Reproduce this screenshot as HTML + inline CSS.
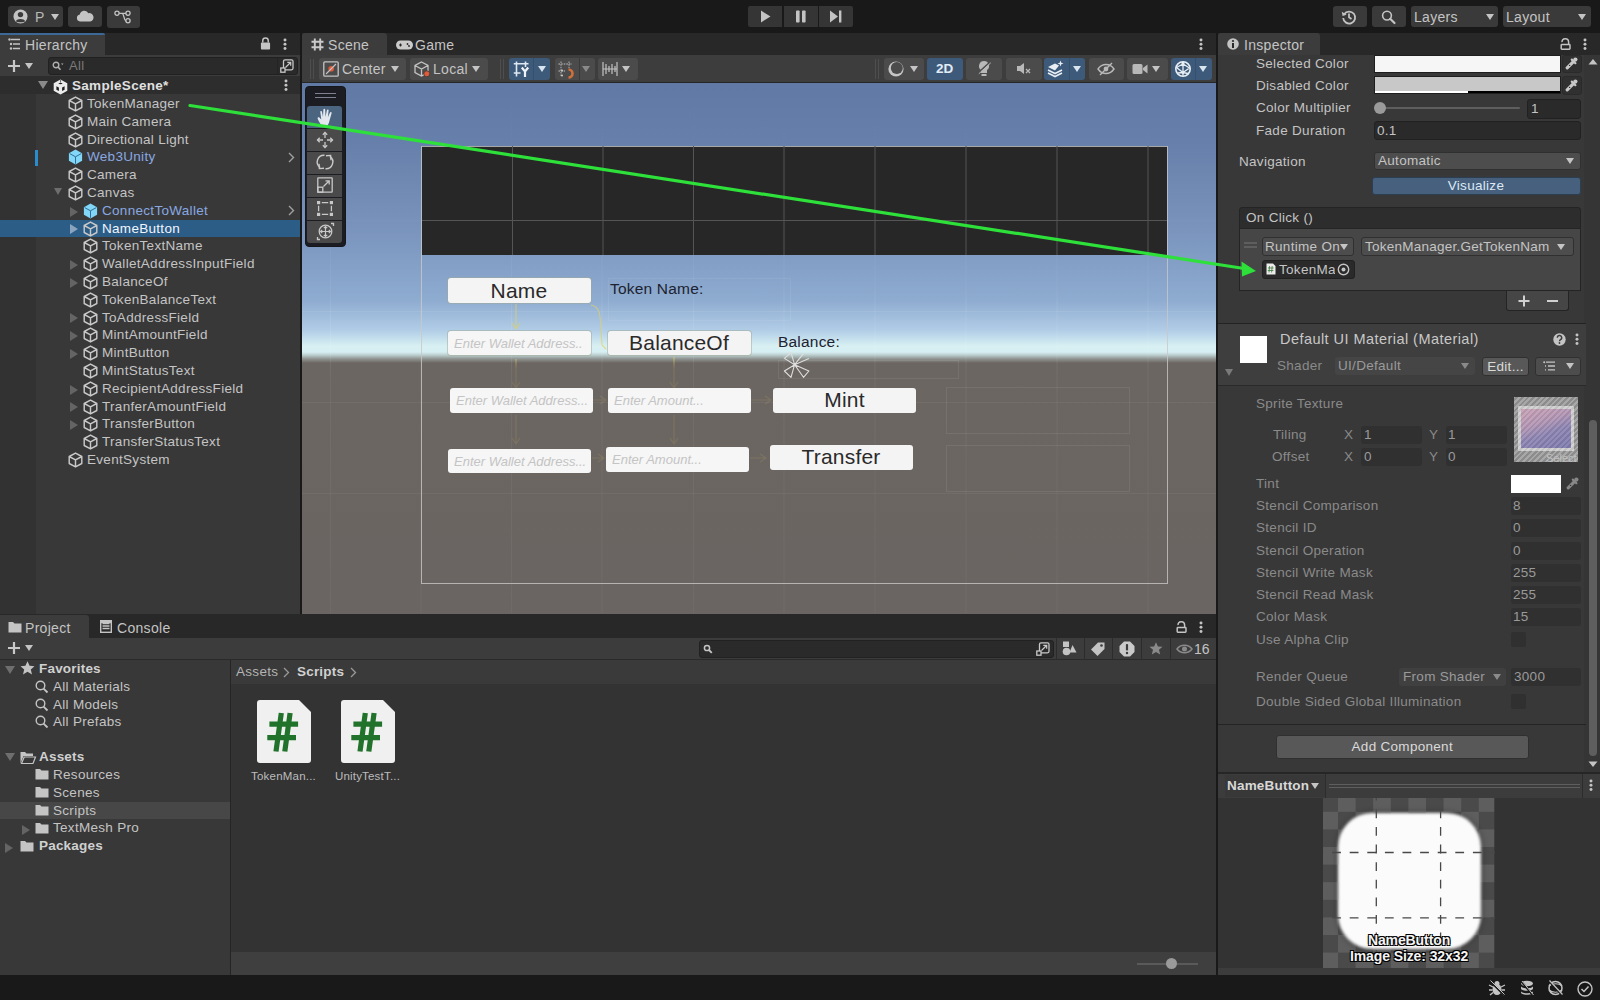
<!DOCTYPE html>
<html><head><meta charset="utf-8">
<style>
*{box-sizing:border-box;margin:0;padding:0}
html,body{width:1600px;height:1000px;overflow:hidden;background:#191919;font-family:"Liberation Sans",sans-serif;color:#c4c4c4;font-size:13.5px;letter-spacing:0.3px;position:relative}
.a{position:absolute}
.t{position:absolute;white-space:nowrap;line-height:16px;height:16px}
svg.i{position:absolute;overflow:visible}
.btn{position:absolute;background:#383838;border-radius:3px}
.dd{position:absolute;width:0;height:0;border-left:4.5px solid transparent;border-right:4.5px solid transparent;border-top:6px solid #c4c4c4}
.row{position:absolute;left:0;width:300px;height:17.8px}
.fold{position:absolute;width:0;height:0;border-top:5px solid transparent;border-bottom:5px solid transparent;border-left:8px solid #646464;margin-top:1px}
.foldd{position:absolute;width:0;height:0;border-left:5px solid transparent;border-right:5px solid transparent;border-top:8px solid #6e6e6e}
</style></head><body>
<svg width="0" height="0" style="position:absolute">
<defs>
<symbol id="cube" viewBox="0 0 14 16"><path d="M7 1.1 L13.3 4.5 L13.3 11.5 L7 14.9 L0.7 11.5 L0.7 4.5 Z M0.7 4.5 L7 7.9 L13.3 4.5 M7 7.9 L7 14.9" fill="none" stroke="#c8c8c8" stroke-width="1.45" stroke-linejoin="round"/></symbol>
<symbol id="cubeb" viewBox="0 0 14 16"><path d="M7 0.6 L13.6 4.2 L13.6 11.8 L7 15.4 L0.4 11.8 L0.4 4.2 Z" fill="#82d6f8"/><path d="M1.2 4.6 L7 7.8 L12.8 4.6 M7 7.8 V14.8" fill="none" stroke="#2f6f96" stroke-width="1"/></symbol>
<symbol id="kebab" viewBox="0 0 4 14"><circle cx="2" cy="2.2" r="1.6" fill="#c4c4c4"/><circle cx="2" cy="6.8" r="1.6" fill="#c4c4c4"/><circle cx="2" cy="11.4" r="1.6" fill="#c4c4c4"/></symbol>
<symbol id="lock" viewBox="0 0 12 14"><path d="M3 6 V4 A3 3 0 0 1 9 4 V6" fill="none" stroke="#c4c4c4" stroke-width="1.6"/><rect x="1" y="6" width="10" height="7.5" rx="1" fill="#c4c4c4"/></symbol>
<symbol id="lockopen" viewBox="0 0 12 14"><path d="M2.2 5.5 A3.6 3.6 0 0 1 9.4 5.2 V7.5" fill="none" stroke="#c4c4c4" stroke-width="1.6"/><rect x="1.3" y="8" width="9.6" height="5.2" rx="0.8" fill="none" stroke="#c4c4c4" stroke-width="1.6"/></symbol>
<symbol id="eyedrop" viewBox="0 0 13 13"><path d="M8.2 4.8 L2.2 10.8" stroke="#c8c8c8" stroke-width="3.2" stroke-linecap="round"/><circle cx="4.6" cy="8.4" r="0.7" fill="#303030"/><path d="M6.8 2.6 L10.4 6.2" stroke="#c8c8c8" stroke-width="2.2" stroke-linecap="round"/><circle cx="10.4" cy="2.6" r="2.1" fill="#c8c8c8"/></symbol>
</defs>
</svg>

<!-- ================= TOP TOOLBAR ================= -->
<div class="a" style="left:0;top:0;width:1600px;height:33px;background:#191919"></div>
<div class="btn" style="left:8px;top:6px;width:55px;height:21px;background:#3a3a3a"></div>
<svg class="i" style="left:13px;top:9px" width="15" height="15" viewBox="0 0 15 15"><circle cx="7.5" cy="7.5" r="7" fill="#c4c4c4"/><circle cx="7.5" cy="5.6" r="2.7" fill="#3a3a3a"/><path d="M2.8 12.2 C4 9.4 11 9.4 12.2 12.2 C10.8 13.6 4.2 13.6 2.8 12.2Z" fill="#3a3a3a"/></svg>
<div class="t" style="left:35px;top:9px;color:#b8b8b8;font-size:14px">P</div>
<div class="dd" style="left:51px;top:14px"></div>
<div class="btn" style="left:68px;top:6px;width:34px;height:21px;background:#3a3a3a"></div>
<svg class="i" style="left:76px;top:10px" width="18" height="12" viewBox="0 0 18 12"><path d="M4 11.5 A3.6 3.6 0 0 1 3.8 4.4 A4.6 4.6 0 0 1 12.4 3.2 A4 4 0 0 1 14.2 11.5 Z" fill="#c4c4c4"/></svg>
<div class="btn" style="left:107px;top:6px;width:33px;height:22px;background:#3a3a3a"></div>
<svg class="i" style="left:114px;top:10px" width="18" height="14" viewBox="0 0 18 14"><circle cx="3" cy="3.3" r="2.1" fill="none" stroke="#c4c4c4" stroke-width="1.3"/><circle cx="14" cy="3.3" r="2.1" fill="none" stroke="#c4c4c4" stroke-width="1.3"/><circle cx="14" cy="10.8" r="2.1" fill="none" stroke="#c4c4c4" stroke-width="1.3"/><path d="M5.1 3.3 H11.9 M8 3.3 C10 3.3 10 10.8 11.9 10.8" fill="none" stroke="#c4c4c4" stroke-width="1.3"/></svg>

<!-- play controls -->
<div class="a" style="left:748px;top:6px;width:34px;height:21px;background:#353535;border-radius:2px 0 0 2px"></div>
<div class="a" style="left:784px;top:6px;width:34px;height:21px;background:#353535"></div>
<div class="a" style="left:819px;top:6px;width:34px;height:21px;background:#353535;border-radius:0 2px 2px 0"></div>
<svg class="i" style="left:760px;top:10px" width="12" height="13" viewBox="0 0 12 13"><path d="M1 0.5 L10.5 6.5 L1 12.5Z" fill="#c4c4c4"/></svg>
<svg class="i" style="left:795px;top:10px" width="12" height="13" viewBox="0 0 12 13"><rect x="1" y="0.5" width="3.6" height="12" rx="0.8" fill="#c4c4c4"/><rect x="7" y="0.5" width="3.6" height="12" rx="0.8" fill="#c4c4c4"/></svg>
<svg class="i" style="left:829px;top:10px" width="14" height="13" viewBox="0 0 14 13"><path d="M1 0.5 L9 6.5 L1 12.5Z" fill="#c4c4c4"/><rect x="10" y="0.5" width="2.4" height="12" fill="#c4c4c4"/></svg>

<!-- right toolbar -->
<div class="btn" style="left:1333px;top:6px;width:34px;height:21px;background:#3a3a3a"></div>
<svg class="i" style="left:1341px;top:9px" width="16" height="16" viewBox="0 0 16 16"><path d="M3.2 5.2 A6 6 0 1 1 2.2 9" fill="none" stroke="#c4c4c4" stroke-width="1.8"/><path d="M0.8 2.8 L1.6 7 L5.6 5.8Z" fill="#c4c4c4"/><path d="M8 4.5 V8.3 L10.5 10" fill="none" stroke="#c4c4c4" stroke-width="1.8"/></svg>
<div class="btn" style="left:1372px;top:6px;width:34px;height:21px;background:#3a3a3a"></div>
<svg class="i" style="left:1381px;top:10px" width="16" height="14" viewBox="0 0 16 14"><circle cx="6" cy="5.6" r="4.4" fill="none" stroke="#c4c4c4" stroke-width="1.6"/><path d="M9.2 8.8 L13.5 13" stroke="#c4c4c4" stroke-width="2.2" stroke-linecap="round"/></svg>
<div class="btn" style="left:1411px;top:6px;width:87px;height:21px;background:#3a3a3a"></div>
<div class="t" style="left:1414px;top:9px;color:#c4c4c4;font-size:14px">Layers</div>
<div class="dd" style="left:1486px;top:14px"></div>
<div class="btn" style="left:1503px;top:6px;width:88px;height:21px;background:#3a3a3a"></div>
<div class="t" style="left:1506px;top:9px;color:#c4c4c4;font-size:14px">Layout</div>
<div class="dd" style="left:1578px;top:14px"></div>

<!-- ================= HIERARCHY ================= -->
<div class="a" style="left:0;top:33px;width:300px;height:22px;background:#282828"></div>
<div class="a" style="left:0;top:33px;width:105px;height:22px;background:#3c3c3c;border-top:2px solid #3b6896;border-radius:0 2px 0 0"></div>
<svg class="i" style="left:8px;top:38px" width="13" height="12" viewBox="0 0 13 12"><circle cx="1.5" cy="1.5" r="1.2" fill="#c4c4c4"/><circle cx="3" cy="6" r="1.2" fill="#c4c4c4"/><circle cx="3" cy="10.5" r="1.2" fill="#c4c4c4"/><path d="M3 1.5 H12 M5 6 H12 M5 10.5 H12" stroke="#c4c4c4" stroke-width="1.4"/></svg>
<div class="t" style="left:25px;top:37px;color:#c4c4c4;font-size:14px">Hierarchy</div>
<svg class="i" style="left:260px;top:37px" width="11" height="13"><use href="#lock"/></svg>
<svg class="i" style="left:283px;top:38px" width="4" height="13"><use href="#kebab"/></svg>
<div class="a" style="left:0;top:55px;width:300px;height:21px;background:#3c3c3c"></div>
<svg class="i" style="left:7px;top:59px" width="14" height="14" viewBox="0 0 14 14"><path d="M7 1 V13 M1 7 H13" stroke="#c8c8c8" stroke-width="2.2"/></svg>
<div class="dd" style="left:25px;top:63px"></div>
<div class="a" style="left:48px;top:57px;width:250px;height:18px;background:#2a2a2a;border-radius:3px;border:1px solid #212121"></div>
<svg class="i" style="left:52px;top:61px" width="12" height="10" viewBox="0 0 12 10"><circle cx="4" cy="4" r="2.8" fill="none" stroke="#b0b0b0" stroke-width="1.4"/><path d="M6 6 L8.5 8.8" stroke="#b0b0b0" stroke-width="1.6"/><path d="M9 2.5 L11.5 2.5 L10.25 4Z" fill="#b0b0b0"/></svg>
<div class="t" style="left:69px;top:58px;color:#7a7a7a;font-size:13px">All</div>
<div class="a" style="left:277px;top:58px;width:1px;height:16px;background:#242424"></div><svg class="i" style="left:280px;top:58.5px" width="14" height="14" viewBox="0 0 14 14"><rect x="3.5" y="0.8" width="9.5" height="10" rx="1.5" fill="none" stroke="#c8c8c8" stroke-width="1.3"/><rect x="0.8" y="9" width="4.2" height="4.2" fill="#2a2a2a" stroke="#c8c8c8" stroke-width="1.3"/><path d="M5.5 8.5 L10.5 3.5 M7.3 3.3 H10.7 V6.7" fill="none" stroke="#c8c8c8" stroke-width="1.2"/></svg>

<!-- hierarchy body -->
<div class="a" style="left:0;top:76px;width:300px;height:538px;background:#383838"></div>
<div class="a" style="left:0;top:94px;width:36px;height:520px;background:#323232"></div>
<div class="a" style="left:0;top:76px;width:300px;height:18px;background:#2d2d2d"></div>
<div class="foldd" style="left:38px;top:81px;border-top-color:#8a8a8a"></div>
<svg class="i" style="left:52.5px;top:78.5px" width="15" height="16" viewBox="0 0 15 16"><path d="M7.5 0.4 L14.3 4.2 L14.3 11.8 L7.5 15.6 L0.7 11.8 L0.7 4.2 Z" fill="#ececec"/><path d="M5.3 4.3 Q7.5 6.3 9.7 4.3 Q7.5 3.1 5.3 4.3Z M3.4 7.2 L5.9 8.5 L5.9 12.1 L3.4 10.8Z M11.6 7.2 L9.1 8.5 L9.1 12.1 L11.6 10.8Z" fill="#202020"/><path d="M7.5 0.8 V3.6" stroke="#777" stroke-width="1.1"/></svg>
<div class="t" style="left:72px;top:78px;color:#e0e0e0;font-weight:bold;font-size:13.5px;letter-spacing:0.3px">SampleScene*</div>
<svg class="i" style="left:284px;top:79px" width="4" height="13"><use href="#kebab"/></svg>

<!-- rows -->
<div class="a" style="left:0;top:219.7px;width:300px;height:17.8px;background:#2c5d87"></div>
<div class="a" style="left:35px;top:150px;width:3px;height:15.5px;background:#2a8ccc"></div>

<svg class="i" style="left:67.7px;top:96px" width="15" height="16"><use href="#cube"/></svg>
<div class="t" style="left:87px;top:96px">TokenManager</div>
<svg class="i" style="left:67.7px;top:113.8px" width="15" height="16"><use href="#cube"/></svg>
<div class="t" style="left:87px;top:113.8px">Main Camera</div>
<svg class="i" style="left:67.7px;top:131.6px" width="15" height="16"><use href="#cube"/></svg>
<div class="t" style="left:87px;top:131.6px">Directional Light</div>
<svg class="i" style="left:67.7px;top:149.4px" width="15" height="16"><use href="#cubeb"/></svg>
<div class="t" style="left:87px;top:149.4px;color:#88a8e2">Web3Unity</div>
<svg class="i" style="left:288px;top:152px" width="7" height="11" viewBox="0 0 7 11"><path d="M1 1 L5.5 5.5 L1 10" fill="none" stroke="#a0a0a0" stroke-width="1.4"/></svg>
<svg class="i" style="left:67.7px;top:167.2px" width="15" height="16"><use href="#cube"/></svg>
<div class="t" style="left:87px;top:167.2px">Camera</div>
<div class="foldd" style="left:54px;top:188px;border-left-width:4.5px;border-right-width:4.5px;border-top-width:7px"></div>
<svg class="i" style="left:67.7px;top:185px" width="15" height="16"><use href="#cube"/></svg>
<div class="t" style="left:87px;top:185px">Canvas</div>

<div class="fold" style="left:70px;top:205.6px"></div>
<svg class="i" style="left:83px;top:202.8px" width="15" height="16"><use href="#cubeb"/></svg>
<div class="t" style="left:102px;top:202.8px;color:#88a8e2">ConnectToWallet</div>
<svg class="i" style="left:288px;top:205px" width="7" height="11" viewBox="0 0 7 11"><path d="M1 1 L5.5 5.5 L1 10" fill="none" stroke="#a0a0a0" stroke-width="1.4"/></svg>
<div class="fold" style="left:70px;top:223.4px;border-left-color:#8aa4c0"></div>
<svg class="i" style="left:83px;top:220.6px" width="15" height="16"><use href="#cube"/></svg>
<div class="t" style="left:102px;top:220.6px;color:#f0f6ff">NameButton</div>
<svg class="i" style="left:83px;top:238.4px" width="15" height="16"><use href="#cube"/></svg>
<div class="t" style="left:102px;top:238.4px">TokenTextName</div>
<div class="fold" style="left:70px;top:259px"></div>
<svg class="i" style="left:83px;top:256.2px" width="15" height="16"><use href="#cube"/></svg>
<div class="t" style="left:102px;top:256.2px">WalletAddressInputField</div>
<div class="fold" style="left:70px;top:276.8px"></div>
<svg class="i" style="left:83px;top:274px" width="15" height="16"><use href="#cube"/></svg>
<div class="t" style="left:102px;top:274px">BalanceOf</div>
<svg class="i" style="left:83px;top:291.8px" width="15" height="16"><use href="#cube"/></svg>
<div class="t" style="left:102px;top:291.8px">TokenBalanceText</div>
<div class="fold" style="left:70px;top:312.4px"></div>
<svg class="i" style="left:83px;top:309.6px" width="15" height="16"><use href="#cube"/></svg>
<div class="t" style="left:102px;top:309.6px">ToAddressField</div>
<div class="fold" style="left:70px;top:330.2px"></div>
<svg class="i" style="left:83px;top:327.4px" width="15" height="16"><use href="#cube"/></svg>
<div class="t" style="left:102px;top:327.4px">MintAmountField</div>
<div class="fold" style="left:70px;top:348px"></div>
<svg class="i" style="left:83px;top:345.2px" width="15" height="16"><use href="#cube"/></svg>
<div class="t" style="left:102px;top:345.2px">MintButton</div>
<svg class="i" style="left:83px;top:363px" width="15" height="16"><use href="#cube"/></svg>
<div class="t" style="left:102px;top:363px">MintStatusText</div>
<div class="fold" style="left:70px;top:383.6px"></div>
<svg class="i" style="left:83px;top:380.8px" width="15" height="16"><use href="#cube"/></svg>
<div class="t" style="left:102px;top:380.8px">RecipientAddressField</div>
<div class="fold" style="left:70px;top:401.4px"></div>
<svg class="i" style="left:83px;top:398.6px" width="15" height="16"><use href="#cube"/></svg>
<div class="t" style="left:102px;top:398.6px">TranferAmountField</div>
<div class="fold" style="left:70px;top:419.2px"></div>
<svg class="i" style="left:83px;top:416.4px" width="15" height="16"><use href="#cube"/></svg>
<div class="t" style="left:102px;top:416.4px">TransferButton</div>
<svg class="i" style="left:83px;top:434.2px" width="15" height="16"><use href="#cube"/></svg>
<div class="t" style="left:102px;top:434.2px">TransferStatusText</div>
<svg class="i" style="left:67.7px;top:452px" width="15" height="16"><use href="#cube"/></svg>
<div class="t" style="left:87px;top:452px">EventSystem</div>

<!-- ================= SCENE ================= -->
<div class="a" style="left:302px;top:33px;width:914px;height:22px;background:#282828"></div>
<div class="a" style="left:302px;top:33px;width:85px;height:22px;background:#3c3c3c;border-radius:3px 3px 0 0"></div>
<svg class="i" style="left:310.5px;top:37.5px" width="13" height="13" viewBox="0 0 13 13"><path d="M3.8 0.5 V12.5 M9.2 0.5 V12.5 M0.5 3.8 H12.5 M0.5 9.2 H12.5" stroke="#cacaca" stroke-width="1.9"/></svg>
<div class="t" style="left:328px;top:37px;font-size:14px">Scene</div>
<svg class="i" style="left:395.5px;top:39.5px" width="17" height="10" viewBox="0 0 17 10"><path d="M4.5 0.5 H12.5 A4.5 4.5 0 0 1 12.5 9.5 H4.5 A4.5 4.5 0 0 1 4.5 0.5Z" fill="#cacaca"/><path d="M3 5 H6 M4.5 3.5 V6.5" stroke="#282828" stroke-width="1.1"/><circle cx="11.5" cy="4" r="0.9" fill="#282828"/><circle cx="13" cy="6" r="0.9" fill="#282828"/></svg>
<div class="t" style="left:415px;top:37px;font-size:14px">Game</div>
<svg class="i" style="left:1199px;top:38px" width="4" height="13"><use href="#kebab"/></svg>

<div class="a" style="left:302px;top:55px;width:914px;height:28px;background:#3d3d3d;border-bottom:1px solid #262626"></div>
<div class="a" style="left:310px;top:59px;width:1px;height:20px;background:#4e4e4e"></div>
<div class="a" style="left:313px;top:59px;width:1px;height:20px;background:#4e4e4e"></div>
<div class="btn" style="left:319px;top:58px;width:87px;height:22px;background:#4b4b4b"></div>
<svg class="i" style="left:323px;top:61px" width="16" height="16" viewBox="0 0 16 16"><rect x="0.8" y="0.8" width="14.4" height="14.4" rx="1" fill="none" stroke="#c4c4c4" stroke-width="1.3"/><circle cx="8.2" cy="7.8" r="2.8" fill="#e05a3a"/><path d="M3 13 L13 3" stroke="#c4c4c4" stroke-width="1.1"/></svg>
<div class="t" style="left:342px;top:61px;font-size:14px">Center</div>
<div class="dd" style="left:391px;top:66px"></div>
<div class="btn" style="left:410px;top:58px;width:78px;height:22px;background:#4b4b4b"></div>
<svg class="i" style="left:414px;top:61px" width="18" height="17" viewBox="0 0 18 17"><path d="M7.5 1 L14 4.5 L14 11.5 L7.5 15 L1 11.5 L1 4.5Z M1 4.5 L7.5 8 L14 4.5 M7.5 8 V15" fill="none" stroke="#c4c4c4" stroke-width="1.3"/><circle cx="12.8" cy="12.8" r="3" fill="#e05a3a" stroke="#3a3a3a" stroke-width="0.8"/></svg>
<div class="t" style="left:433px;top:61px;font-size:14px">Local</div>
<div class="dd" style="left:472px;top:66px"></div>
<div class="a" style="left:500px;top:59px;width:1px;height:20px;background:#4e4e4e"></div>
<div class="a" style="left:503px;top:59px;width:1px;height:20px;background:#4e4e4e"></div>
<div class="a" style="left:509px;top:58px;width:41px;height:22px;background:#3e5a7a;border-radius:3px"></div>
<div class="a" style="left:533px;top:58px;width:1px;height:22px;background:#34506e"></div>
<svg class="i" style="left:512.5px;top:61px" width="18" height="17" viewBox="0 0 18 17"><path d="M3.5 0.5 V15.5 M12.5 0.5 V6 M0.8 2.8 H15.5 M0.8 12 H7.5" stroke="#dfe8f2" stroke-width="1.6"/><path d="M8.8 6.5 L12 10.5 L15.2 6.5 M12 10.5 V16" fill="none" stroke="#eef3f8" stroke-width="2.2"/></svg>
<div class="dd" style="left:538px;top:66px;border-top-color:#d8e4f0"></div>
<div class="btn" style="left:555px;top:58px;width:40px;height:22px;background:#4b4b4b"></div><div class="a" style="left:578.5px;top:58px;width:1px;height:22px;background:#3a3a3a"></div>
<svg class="i" style="left:558px;top:61px" width="18" height="17" viewBox="0 0 18 17"><path d="M3 0.5 V16 M11 0.5 V7 M0.5 3 H14 M0.5 10 H7" stroke="#9a9a9a" stroke-width="1.3" stroke-dasharray="1.6 1"/><circle cx="4" cy="9.5" r="1.1" fill="#c4c4c4"/><circle cx="4" cy="14.5" r="1.1" fill="#c4c4c4"/><path d="M10.5 8.5 A4 4 0 0 1 10.5 16.5" fill="none" stroke="#d0703a" stroke-width="2.6"/></svg>
<div class="dd" style="left:582px;top:66px;border-top-color:#8a8a8a"></div>
<div class="btn" style="left:598px;top:58px;width:40px;height:22px;background:#4b4b4b"></div>
<svg class="i" style="left:602px;top:61px" width="16" height="16" viewBox="0 0 16 16"><path d="M1 1 V15 M15 1 V15 M1 8 H15 M4 3 V13 M7 5 V11 M10 3 V13 M13 5 V11" stroke="#c4c4c4" stroke-width="1.2"/></svg>
<div class="dd" style="left:622px;top:66px"></div>

<div class="a" style="left:875px;top:59px;width:1px;height:20px;background:#4e4e4e"></div>
<div class="a" style="left:878px;top:59px;width:1px;height:20px;background:#4e4e4e"></div>
<div class="btn" style="left:884px;top:58px;width:40px;height:22px;background:#4b4b4b"></div>
<svg class="i" style="left:887px;top:60px" width="18" height="18" viewBox="0 0 18 18"><circle cx="9" cy="9" r="7.6" fill="#c4c4c4"/><circle cx="9.8" cy="8" r="6" fill="#4b4b4b"/></svg>
<div class="dd" style="left:910px;top:66px"></div>
<div class="a" style="left:927px;top:58px;width:36px;height:22px;background:#3e5a7a;border-radius:3px"></div>
<div class="t" style="left:936px;top:61px;font-size:13.5px;font-weight:bold;color:#e2ecf6;letter-spacing:0">2D</div>
<div class="btn" style="left:966px;top:58px;width:36px;height:22px;background:#4b4b4b"></div>
<svg class="i" style="left:976px;top:60px" width="16" height="17" viewBox="0 0 16 17"><path d="M8 1 A5 5 0 0 1 11 10 V13 H5 V10 A5 5 0 0 1 8 1Z" fill="#b8b8b8"/><rect x="5.5" y="14" width="5" height="2" fill="#b8b8b8"/><path d="M2 13 L14 2" stroke="#4b4b4b" stroke-width="1.6"/><path d="M2.8 13.8 L14.8 2.8" stroke="#b8b8b8" stroke-width="1"/></svg>
<div class="btn" style="left:1006px;top:58px;width:36px;height:22px;background:#4b4b4b"></div>
<svg class="i" style="left:1016px;top:62px" width="16" height="14" viewBox="0 0 16 14"><path d="M1 4 H4 L8 1 V12 L4 9 H1Z" fill="#b8b8b8"/><path d="M10 7 L14 11 M14 7 L10 11" stroke="#b8b8b8" stroke-width="1.3"/></svg>
<div class="a" style="left:1044px;top:58px;width:41px;height:22px;background:#3e5a7a;border-radius:3px"></div>
<div class="a" style="left:1069px;top:58px;width:1px;height:22px;background:#34506e"></div>
<svg class="i" style="left:1047px;top:60px" width="18" height="17" viewBox="0 0 18 17"><path d="M1 10 L8 13.5 L15 10 M1 13 L8 16.5 L15 13" fill="none" stroke="#e8eef4" stroke-width="1.6"/><path d="M1 7 L8 3.5 L12 5.5 L8 10.5Z" fill="#e8eef4"/><path d="M13.5 0.5 L14.3 2.7 L16.5 3.5 L14.3 4.3 L13.5 6.5 L12.7 4.3 L10.5 3.5 L12.7 2.7Z" fill="#e8eef4"/></svg>
<div class="dd" style="left:1073px;top:66px;border-top-color:#d8e4f0"></div>
<div class="btn" style="left:1089px;top:58px;width:35px;height:22px;background:#4b4b4b"></div>
<svg class="i" style="left:1097px;top:62px" width="18" height="14" viewBox="0 0 18 14"><path d="M1 7 C5 1 13 1 17 7 C13 13 5 13 1 7Z" fill="none" stroke="#b8b8b8" stroke-width="1.4"/><circle cx="9" cy="7" r="2.4" fill="#b8b8b8"/><path d="M3 13 L15 1" stroke="#b8b8b8" stroke-width="1.4"/></svg>
<div class="btn" style="left:1127px;top:58px;width:41px;height:22px;background:#4b4b4b"></div>
<svg class="i" style="left:1132px;top:63px" width="16" height="12" viewBox="0 0 16 12"><rect x="0.5" y="1" width="10" height="10" rx="1.5" fill="#b8b8b8"/><path d="M11 5 L15.5 1.5 V10.5 L11 7Z" fill="#b8b8b8"/></svg>
<div class="dd" style="left:1152px;top:66px"></div>
<div class="a" style="left:1171px;top:58px;width:41px;height:22px;background:#3e5a7a;border-radius:3px"></div>
<div class="a" style="left:1195px;top:58px;width:1px;height:22px;background:#34506e"></div>
<svg class="i" style="left:1174px;top:60px" width="18" height="18" viewBox="0 0 18 18"><circle cx="9" cy="9" r="7.2" fill="none" stroke="#e8eef4" stroke-width="1.6"/><path d="M2.5 7.5 L9 4 L15.5 8 L9 12.5Z M9 4 V16 M4 13 L9 12.5 L14 13.5" fill="none" stroke="#e8eef4" stroke-width="1.3"/><circle cx="9" cy="3" r="1.6" fill="#e8eef4"/><circle cx="9" cy="12.5" r="1.4" fill="#e8eef4"/></svg>
<div class="dd" style="left:1199px;top:66px;border-top-color:#d8e4f0"></div>

<!-- scene viewport -->
<div class="a" id="vp" style="left:302px;top:83px;width:914px;height:531px;overflow:hidden;background:linear-gradient(to bottom,#6079a5 0px,#6680ab 60px,#7892bb 140px,#8eabd0 217px,#b0cce6 247px,#c8e2ee 257px,#d8f0f2 263px,#d6eff3 269px,#bccfcf 272px,#8e9290 276px,#6c6662 280px,#6a6562 530px)">
 <!-- grid -->
 <svg width="914" height="530" style="position:absolute;left:0;top:0">
  <defs><linearGradient id="gridg" gradientUnits="userSpaceOnUse" x1="0" y1="0" x2="0" y2="530"><stop offset="0" stop-color="#fff" stop-opacity="0"/><stop offset="0.3" stop-color="#fff" stop-opacity="0.03"/><stop offset="0.48" stop-color="#fff" stop-opacity="0.09"/><stop offset="0.56" stop-color="#fff" stop-opacity="0.05"/><stop offset="1" stop-color="#fff" stop-opacity="0.035"/></linearGradient></defs><g stroke="url(#gridg)" stroke-width="1">
   <path d="M28.5 0V530 M119 0V530 M209.5 0V530 M300 0V530 M391.5 0V530 M482 0V530 M573 0V530 M664 0V530 M755 0V530 M846 0V530"/>
   <path d="M0 46.5H914 M0 137.5H914 M0 228.5H914 M0 319.5H914 M0 410.5H914"/>
  </g>
 </svg>
 <!-- canvas border -->
 
 <!-- dark rect -->
 <div class="a" style="left:120px;top:63px;width:745px;height:109px;background:#272727"></div>
 <div class="a" style="left:119px;top:63px;width:747px;height:438px;border:1px solid #c8c8c8;opacity:0.8"></div>
 <svg width="914" height="530" style="position:absolute;left:0;top:0">
  <g stroke="#555555" stroke-width="1">
   <path d="M210.5 63V172 M301 63V172 M391.5 63V172 M482 63V172 M573 63V172 M664 63V172 M755 63V172 M846 63V172 M120 137.5H865"/>
  </g>
  <!-- faint rects -->
  <g fill="none" stroke="rgba(255,255,255,0.075)" stroke-width="1">
   <rect x="306.5" y="195.5" width="182" height="42"/>
   <rect x="476.5" y="277.5" width="180" height="18"/>
   <rect x="644.5" y="304.5" width="183" height="46"/>
   <rect x="644.5" y="362.5" width="183" height="46"/>
  </g>
  <!-- nav lines (yellow) -->
  <defs><linearGradient id="navg" gradientUnits="userSpaceOnUse" x1="0" y1="0" x2="0" y2="530"><stop offset="0" stop-color="#e0d060" stop-opacity="0.75"/><stop offset="0.52" stop-color="#e0d060" stop-opacity="0.7"/><stop offset="0.54" stop-color="#c8b050" stop-opacity="0.17"/><stop offset="1" stop-color="#c8b050" stop-opacity="0.17"/></linearGradient></defs><g fill="none" stroke="url(#navg)" stroke-width="1.1">
   <path d="M214 221 V245 M210 240 L214 246 L218 240"/>
   <path d="M289 222 C300 224 298 235 300 262 L304 266"/>
   <path d="M372 274 V304 M368 299 L372 305 L376 299"/>
   <path d="M214 276 V304 M210 299 L214 305 L218 299"/>
   <path d="M290 317 L303 317 M298 313 L304 317 L298 321"/>
   <path d="M448 317 L468 317 M463 313 L469 317 L463 321"/>
   <path d="M214 332 V360 M210 355 L214 361 L218 355"/>
   <path d="M372 332 V360 M368 355 L372 361 L376 355"/>
   <path d="M290 375 L302 375 M296 371 L302 375 L296 379"/>
   <path d="M448 375 L464 375 M458 371 L464 375 L458 379"/>
  </g>
 </svg>
 <!-- UI elements -->
 <div class="a" style="left:145.5px;top:195px;width:143px;height:25px;background:#f4f4f4;border-radius:3px;box-shadow:0 0 0 1px rgba(160,170,150,0.5)"></div>
 <div class="t" style="left:145.5px;top:198px;width:143px;text-align:center;color:#2a2a2a;font-size:21px;line-height:20px;height:20px;letter-spacing:0.2px">Name</div>
 <div class="t" style="left:308px;top:198px;color:#1c2230;font-size:15.5px;line-height:16px;letter-spacing:0.2px">Token Name:</div>

 <div class="a" style="left:145.5px;top:248px;width:143px;height:24px;background:#f6f6f6;border-radius:3px;box-shadow:0 0 0 1px rgba(160,170,150,0.5)"></div>
 <div class="t" style="left:152px;top:253px;color:#c4c4c4;font-size:13px;font-style:italic;letter-spacing:0">Enter Wallet Address..</div>
 <div class="a" style="left:305.5px;top:248px;width:143px;height:24px;background:#f4f4f4;border-radius:3px;box-shadow:0 0 0 1px rgba(160,170,150,0.5)"></div>
 <div class="t" style="left:305.5px;top:250px;width:143px;text-align:center;color:#2a2a2a;font-size:21px;line-height:20px;height:20px;letter-spacing:0.2px">BalanceOf</div>
 <div class="t" style="left:476px;top:251px;color:#1c2230;font-size:15.5px;letter-spacing:0.2px">Balance:</div>
 <svg class="i" style="left:478px;top:267px" width="30" height="30" viewBox="0 0 30 30"><path d="M14.6 14.7 L4.4 8.4 L11 2.5 Z M14.6 14.7 L23.6 3.3 M14.6 14.7 L28.9 8.4 M14.6 14.7 L4.4 21 L11 27.3 Z M14.6 14.7 L28.9 21 L23.5 27.3 Z" fill="none" stroke="#dedede" stroke-width="1.1" stroke-linejoin="round"/></svg>

 <div class="a" style="left:147.5px;top:305px;width:143px;height:24.5px;background:#f6f6f6;border-radius:3px"></div>
 <div class="t" style="left:154px;top:310px;color:#c4c4c4;font-size:13px;font-style:italic;letter-spacing:0">Enter Wallet Address...</div>
 <div class="a" style="left:305.5px;top:305px;width:143px;height:24.5px;background:#f6f6f6;border-radius:3px"></div>
 <div class="t" style="left:312px;top:310px;color:#c4c4c4;font-size:13px;font-style:italic;letter-spacing:0">Enter Amount...</div>
 <div class="a" style="left:471px;top:305px;width:143px;height:24.5px;background:#f4f4f4;border-radius:3px"></div>
 <div class="t" style="left:471px;top:307px;width:143px;text-align:center;color:#2a2a2a;font-size:21px;line-height:20px;height:20px;letter-spacing:0.2px">Mint</div>

 <div class="a" style="left:145.5px;top:366px;width:143px;height:24px;background:#f6f6f6;border-radius:3px"></div>
 <div class="t" style="left:152px;top:371px;color:#c4c4c4;font-size:13px;font-style:italic;letter-spacing:0">Enter Wallet Address...</div>
 <div class="a" style="left:303.5px;top:364px;width:143px;height:24.5px;background:#f6f6f6;border-radius:3px"></div>
 <div class="t" style="left:310px;top:369px;color:#c4c4c4;font-size:13px;font-style:italic;letter-spacing:0">Enter Amount...</div>
 <div class="a" style="left:467.5px;top:362px;width:143px;height:24.5px;background:#f4f4f4;border-radius:3px"></div>
 <div class="t" style="left:467.5px;top:364px;width:143px;text-align:center;color:#2a2a2a;font-size:21px;line-height:20px;height:20px;letter-spacing:0.2px">Transfer</div>

 <!-- tools overlay -->
 <div class="a" style="left:2.5px;top:3px;width:41px;height:161px;background:#1b1d22;border-radius:4px;border:1px solid #15171b"></div>
 <div class="a" style="left:13px;top:10px;width:21px;height:1.3px;background:#7d8190"></div>
 <div class="a" style="left:13px;top:14px;width:21px;height:1.3px;background:#7d8190"></div>
 <div class="a" style="left:4.8px;top:22.5px;width:35.6px;height:22.5px;background:#4b6480;border-radius:3px 3px 0 0"></div>
 <div class="a" style="left:4.8px;top:45.5px;width:35.6px;height:22.5px;background:#4a4a4a"></div>
 <div class="a" style="left:4.8px;top:68.5px;width:35.6px;height:22.5px;background:#4a4a4a"></div>
 <div class="a" style="left:4.8px;top:91.5px;width:35.6px;height:22.5px;background:#4a4a4a"></div>
 <div class="a" style="left:4.8px;top:114.5px;width:35.6px;height:22.5px;background:#4a4a4a"></div>
 <div class="a" style="left:4.8px;top:137.5px;width:35.6px;height:22.5px;background:#4a4a4a;border-radius:0 0 3px 3px"></div>
 <svg class="i" style="left:13.8px;top:24.5px" width="18" height="18" viewBox="0 0 18 18"><path d="M5.5 17.5 C3.8 15 1.8 11.8 1.6 10.2 C1.5 9.2 2.8 8.8 3.6 9.7 L5.3 11.6 L4.3 4 C4.2 2.9 5.8 2.7 6 3.8 L7 9 L7.4 1.5 C7.5 0.4 9.1 0.4 9.2 1.5 L9.5 9 L10.9 2.3 C11.1 1.2 12.7 1.4 12.6 2.5 L11.9 9.3 L14 4.6 C14.4 3.6 15.9 4.1 15.6 5.2 L13.6 12.3 C13 15.2 12 17.5 11 17.5 Z" fill="#e2e8ee"/></svg>
 <svg class="i" style="left:13.5px;top:47.5px" width="18" height="18" viewBox="0 0 18 18"><path d="M9 1.5 V7 M9 11 V16.5 M1.5 9 H7 M11 9 H16.5" stroke="#c8c8c8" stroke-width="1.3"/><path d="M6.8 3.7 L9 1.5 L11.2 3.7 M6.8 14.3 L9 16.5 L11.2 14.3 M3.7 6.8 L1.5 9 L3.7 11.2 M14.3 6.8 L16.5 9 L14.3 11.2" fill="none" stroke="#c8c8c8" stroke-width="1.3"/></svg>
 <svg class="i" style="left:13.5px;top:70px" width="18" height="18" viewBox="0 0 18 18"><path d="M8.5 2.2 A6.8 6.8 0 0 0 4.2 14.6" fill="none" stroke="#c8c8c8" stroke-width="1.4"/><path d="M3 10.8 L3.4 15.6 L8 15.2" fill="none" stroke="#c8c8c8" stroke-width="1.4"/><path d="M9.5 15.8 A6.8 6.8 0 0 0 13.8 3.4" fill="none" stroke="#c8c8c8" stroke-width="1.4"/><path d="M10 2.8 L14.6 2.4 L15 7.2" fill="none" stroke="#c8c8c8" stroke-width="1.4"/></svg>
 <svg class="i" style="left:14.5px;top:94px" width="16" height="16" viewBox="0 0 16 16"><rect x="0.8" y="0.8" width="14.4" height="14.4" rx="0.5" fill="none" stroke="#c8c8c8" stroke-width="1.3"/><rect x="0.8" y="10.2" width="5" height="5" fill="none" stroke="#c8c8c8" stroke-width="1.3"/><path d="M6.5 9.5 L12 4 M8.5 3.8 H12.2 V7.5" fill="none" stroke="#c8c8c8" stroke-width="1.3"/></svg>
 <svg class="i" style="left:14px;top:117px" width="18" height="17" viewBox="0 0 18 17"><rect x="1" y="1" width="3.2" height="3.2" fill="#c8c8c8"/><rect x="13.8" y="1" width="3.2" height="3.2" fill="#c8c8c8"/><rect x="1" y="12.8" width="3.2" height="3.2" fill="#c8c8c8"/><rect x="13.8" y="12.8" width="3.2" height="3.2" fill="#c8c8c8"/><path d="M5.8 2.6 H12.2 M5.8 14.4 H12.2 M2.6 5.8 V11.2 M15.4 5.8 V11.2" stroke="#c8c8c8" stroke-width="1.3"/></svg>
 <svg class="i" style="left:13.5px;top:139px" width="19" height="19" viewBox="0 0 19 19"><circle cx="9.5" cy="9.5" r="6.3" fill="none" stroke="#c8c8c8" stroke-width="1.3"/><path d="M9.5 4.5 V14.5 M4.5 9.5 H14.5" stroke="#c8c8c8" stroke-width="1.2"/><path d="M7.8 6.2 L9.5 4.5 L11.2 6.2 M7.8 12.8 L9.5 14.5 L11.2 12.8 M6.2 7.8 L4.5 9.5 L6.2 11.2 M12.8 7.8 L14.5 9.5 L12.8 11.2" fill="none" stroke="#c8c8c8" stroke-width="1.2"/><path d="M15 1.5 H17.5 V4 M4 17.5 H1.5 V15" fill="none" stroke="#c8c8c8" stroke-width="1.3"/></svg>
</div>

<!-- ================= PROJECT ================= -->
<div class="a" style="left:0;top:614px;width:1216px;height:24px;background:#282828"></div>
<div class="a" style="left:0;top:615px;width:89px;height:23px;background:#3c3c3c;border-radius:0 3px 0 0"></div>
<svg class="i" style="left:8px;top:621px" width="14" height="12" viewBox="0 0 14 12"><path d="M0.5 1 H5 L6.5 2.5 H13.5 V11.5 H0.5Z" fill="#c4c4c4"/></svg>
<div class="t" style="left:25px;top:620px;font-size:14px">Project</div>
<svg class="i" style="left:100px;top:620px" width="12" height="13" viewBox="0 0 12 13"><rect x="0.7" y="0.7" width="10.6" height="11.6" fill="none" stroke="#c4c4c4" stroke-width="1.4"/><path d="M2.5 3.5 H9.5 M2.5 6 H9.5 M2.5 8.5 H9.5" stroke="#c4c4c4" stroke-width="1.3"/><rect x="0.7" y="0.7" width="10.6" height="2.5" fill="#c4c4c4"/></svg>
<div class="t" style="left:117px;top:620px;font-size:14px">Console</div>
<svg class="i" style="left:1176px;top:620px" width="11" height="13"><use href="#lockopen"/></svg>
<svg class="i" style="left:1199px;top:621px" width="4" height="13"><use href="#kebab"/></svg>

<div class="a" style="left:0;top:638px;width:1216px;height:22px;background:#3c3c3c;border-bottom:1px solid #2a2a2a"></div>
<svg class="i" style="left:7px;top:641px" width="14" height="14" viewBox="0 0 14 14"><path d="M7 1 V13 M1 7 H13" stroke="#c8c8c8" stroke-width="2.2"/></svg>
<div class="dd" style="left:25px;top:645px"></div>
<div class="a" style="left:699px;top:640px;width:355px;height:18px;background:#2a2a2a;border-radius:3px;border:1px solid #212121"></div>
<svg class="i" style="left:703px;top:644px" width="10" height="10" viewBox="0 0 10 10"><circle cx="4" cy="4" r="2.6" fill="none" stroke="#c4c4c4" stroke-width="1.5"/><path d="M6 6 L8.8 8.8" stroke="#c4c4c4" stroke-width="1.8"/></svg>
<svg class="i" style="left:1036px;top:641.5px" width="14" height="14" viewBox="0 0 14 14"><rect x="3.5" y="0.8" width="9.5" height="10" rx="1.5" fill="none" stroke="#c8c8c8" stroke-width="1.3"/><rect x="0.8" y="9" width="4.2" height="4.2" fill="#2a2a2a" stroke="#c8c8c8" stroke-width="1.3"/><path d="M5.5 8.5 L10.5 3.5 M7.3 3.3 H10.7 V6.7" fill="none" stroke="#c8c8c8" stroke-width="1.2"/></svg>
<div class="a" style="left:1056px;top:638px;width:1px;height:22px;background:#2c2c2c"></div>
<svg class="i" style="left:1062px;top:641px" width="15" height="15" viewBox="0 0 15 15"><rect x="1" y="0.5" width="6" height="5.5" fill="#c4c4c4"/><circle cx="4.5" cy="10.5" r="3.8" fill="#c4c4c4"/><path d="M10.5 4 L14.5 11.5 H7.5Z" fill="#c4c4c4"/></svg>
<div class="a" style="left:1084px;top:638px;width:1px;height:22px;background:#2c2c2c"></div>
<svg class="i" style="left:1091px;top:642px" width="14" height="14" viewBox="0 0 14 14"><path d="M7 0.5 H13.5 V7 L6.5 14 L0 7.5Z" fill="#c4c4c4"/><circle cx="10.5" cy="3.5" r="1.3" fill="#3c3c3c"/></svg>
<div class="a" style="left:1112px;top:638px;width:1px;height:22px;background:#2c2c2c"></div>
<svg class="i" style="left:1119px;top:641px" width="16" height="16" viewBox="0 0 16 16"><path d="M5 0.5 H11 L15.5 5 V11 L11 15.5 H5 L0.5 11 V5Z" fill="#cacaca"/><rect x="6.9" y="3" width="2.2" height="6.5" rx="0.8" fill="#3c3c3c"/><circle cx="8" cy="12" r="1.2" fill="#3c3c3c"/></svg>
<div class="a" style="left:1141px;top:638px;width:1px;height:22px;background:#2c2c2c"></div>
<svg class="i" style="left:1149px;top:642px" width="14" height="13" viewBox="0 0 14 13"><path d="M7 0.3 L8.9 4.5 L13.5 4.8 L10 7.8 L11.2 12.5 L7 10 L2.8 12.5 L4 7.8 L0.5 4.8 L5.1 4.5Z" fill="#8a8a8a"/></svg>
<div class="a" style="left:1170px;top:638px;width:1px;height:22px;background:#2c2c2c"></div>
<svg class="i" style="left:1176px;top:644px" width="17" height="10" viewBox="0 0 17 10"><path d="M1 5 C4.5 0 12.5 0 16 5 C12.5 10 4.5 10 1 5Z" fill="none" stroke="#8a8a8a" stroke-width="1.5"/><circle cx="8.5" cy="5" r="2.5" fill="#8a8a8a"/></svg>
<div class="t" style="left:1194px;top:641px;font-size:14px;color:#c4c4c4;letter-spacing:0">16</div>

<!-- left tree -->
<div class="a" style="left:0;top:660px;width:230px;height:315px;background:#383838"></div>
<div class="a" style="left:230px;top:660px;width:1px;height:315px;background:#252525"></div>
<div class="foldd" style="left:5px;top:666px"></div>
<svg class="i" style="left:20px;top:661px" width="15" height="14" viewBox="0 0 15 14"><path d="M7.5 0.3 L9.6 4.8 L14.5 5.2 L10.8 8.4 L12 13.5 L7.5 10.8 L3 13.5 L4.2 8.4 L0.5 5.2 L5.4 4.8Z" fill="#c4c4c4"/></svg>
<div class="t" style="left:39px;top:661px;font-weight:bold;color:#d0d0d0;letter-spacing:0.2px">Favorites</div>
<svg class="i" style="left:35px;top:680px" width="14" height="14" viewBox="0 0 14 14"><circle cx="5.5" cy="5.5" r="4.3" fill="none" stroke="#c4c4c4" stroke-width="1.4"/><path d="M8.6 8.6 L12.5 12.5" stroke="#c4c4c4" stroke-width="1.8"/></svg>
<div class="t" style="left:53px;top:679px">All Materials</div>
<svg class="i" style="left:35px;top:698px" width="14" height="14" viewBox="0 0 14 14"><circle cx="5.5" cy="5.5" r="4.3" fill="none" stroke="#c4c4c4" stroke-width="1.4"/><path d="M8.6 8.6 L12.5 12.5" stroke="#c4c4c4" stroke-width="1.8"/></svg>
<div class="t" style="left:53px;top:697px">All Models</div>
<svg class="i" style="left:35px;top:715px" width="14" height="14" viewBox="0 0 14 14"><circle cx="5.5" cy="5.5" r="4.3" fill="none" stroke="#c4c4c4" stroke-width="1.4"/><path d="M8.6 8.6 L12.5 12.5" stroke="#c4c4c4" stroke-width="1.8"/></svg>
<div class="t" style="left:53px;top:714px">All Prefabs</div>

<div class="foldd" style="left:5px;top:753px"></div>
<svg class="i" style="left:20px;top:751px" width="16" height="13" viewBox="0 0 16 13"><path d="M0.5 12.5 V1 H5 L6.5 2.5 H13 V5 H3.5 L0.5 12.5Z" fill="#c4c4c4"/><path d="M1.5 12.5 L4.2 6 H15.5 L13 12.5Z" fill="none" stroke="#c4c4c4" stroke-width="1.2"/></svg>
<div class="t" style="left:39px;top:749px;font-weight:bold;color:#d0d0d0;letter-spacing:0.2px">Assets</div>
<svg class="i" style="left:35px;top:768px" width="14" height="12" viewBox="0 0 14 12"><path d="M0.5 1 H5 L6.5 2.5 H13.5 V11.5 H0.5Z" fill="#c4c4c4"/></svg>
<div class="t" style="left:53px;top:767px">Resources</div>
<svg class="i" style="left:35px;top:786px" width="14" height="12" viewBox="0 0 14 12"><path d="M0.5 1 H5 L6.5 2.5 H13.5 V11.5 H0.5Z" fill="#c4c4c4"/></svg>
<div class="t" style="left:53px;top:785px">Scenes</div>
<div class="a" style="left:0;top:801.5px;width:230px;height:17.8px;background:#474747"></div>
<svg class="i" style="left:35px;top:804px" width="14" height="12" viewBox="0 0 14 12"><path d="M0.5 1 H5 L6.5 2.5 H13.5 V11.5 H0.5Z" fill="#c4c4c4"/></svg>
<div class="t" style="left:53px;top:803px">Scripts</div>
<div class="fold" style="left:22px;top:824px"></div>
<svg class="i" style="left:35px;top:822px" width="14" height="12" viewBox="0 0 14 12"><path d="M0.5 1 H5 L6.5 2.5 H13.5 V11.5 H0.5Z" fill="#c4c4c4"/></svg>
<div class="t" style="left:53px;top:820px">TextMesh Pro</div>
<div class="fold" style="left:5px;top:842px"></div>
<svg class="i" style="left:20px;top:840px" width="14" height="12" viewBox="0 0 14 12"><path d="M0.5 1 H5 L6.5 2.5 H13.5 V11.5 H0.5Z" fill="#c4c4c4"/></svg>
<div class="t" style="left:39px;top:838px;font-weight:bold;color:#d0d0d0;letter-spacing:0.2px">Packages</div>

<!-- right grid -->
<div class="a" style="left:231px;top:660px;width:985px;height:315px;background:#333333"></div>
<div class="a" style="left:231px;top:660px;width:985px;height:24px;background:#3a3a3a"></div>
<div class="t" style="left:236px;top:664px;color:#b4b4b4">Assets</div>
<svg class="i" style="left:283px;top:667px" width="7" height="11" viewBox="0 0 7 11"><path d="M1 1 L5.5 5.5 L1 10" fill="none" stroke="#9a9a9a" stroke-width="1.3"/></svg>
<div class="t" style="left:297px;top:664px;font-weight:bold;color:#d0d0d0;letter-spacing:0.2px">Scripts</div>
<svg class="i" style="left:350px;top:667px" width="7" height="11" viewBox="0 0 7 11"><path d="M1 1 L5.5 5.5 L1 10" fill="none" stroke="#9a9a9a" stroke-width="1.3"/></svg>

<svg class="i" style="left:257px;top:699.5px" width="54" height="63" viewBox="0 0 54 63"><path d="M3 0 H42 L54 12 V60 A3 3 0 0 1 51 63 H3 A3 3 0 0 1 0 60 V3 A3 3 0 0 1 3 0Z" fill="#f0f0f0"/><path d="M24.3 13 L19 51.5 M33.1 13 L27.8 51.5 M12.4 24.2 H41.1 M10.3 37.7 H39" stroke="#21722a" stroke-width="5.2"/></svg>
<div class="t" style="left:246px;top:768px;width:75px;text-align:center;font-size:11.5px;letter-spacing:0.2px;color:#bcbcbc">TokenMan...</div>
<svg class="i" style="left:341px;top:699.5px" width="54" height="63" viewBox="0 0 54 63"><path d="M3 0 H42 L54 12 V60 A3 3 0 0 1 51 63 H3 A3 3 0 0 1 0 60 V3 A3 3 0 0 1 3 0Z" fill="#f0f0f0"/><path d="M24.3 13 L19 51.5 M33.1 13 L27.8 51.5 M12.4 24.2 H41.1 M10.3 37.7 H39" stroke="#21722a" stroke-width="5.2"/></svg>
<div class="t" style="left:330px;top:768px;width:75px;text-align:center;font-size:11.5px;letter-spacing:0.2px;color:#bcbcbc">UnityTestT...</div>

<div class="a" style="left:231px;top:952px;width:985px;height:23px;background:#3f3f3f"></div>
<div class="a" style="left:1137px;top:963px;width:61px;height:1.5px;background:#5a5a5a"></div>
<div class="a" style="left:1166px;top:958px;width:11px;height:11px;border-radius:50%;background:#9a9a9a"></div>

<!-- bottom status bar -->
<div class="a" style="left:0;top:975.5px;width:1600px;height:24.5px;background:#191919"></div>
<svg class="i" style="left:1488px;top:980px" width="18" height="16" viewBox="0 0 18 16"><ellipse cx="9" cy="9.5" rx="4.5" ry="5.5" fill="#c4c4c4"/><circle cx="9" cy="3.5" r="2.5" fill="#c4c4c4"/><path d="M1 5 L5 7 M17 5 L13 7 M1 10 H4.5 M17 10 H13.5 M2 15 L5 12.5 M16 15 L13 12.5" stroke="#c4c4c4" stroke-width="1.3"/><path d="M2 1 L16 15" stroke="#191919" stroke-width="2"/><path d="M2.5 0.5 L16.5 14.5" stroke="#c4c4c4" stroke-width="1"/></svg>
<svg class="i" style="left:1519px;top:980px" width="16" height="16" viewBox="0 0 16 16"><ellipse cx="8" cy="3.5" rx="6" ry="2.8" fill="#c4c4c4"/><path d="M2 6 C2 9 14 9 14 6 V8.5 C14 11.5 2 11.5 2 8.5Z M2 11 C2 14 14 14 14 11 V12.5 C14 15.5 2 15.5 2 12.5Z" fill="#c4c4c4"/><path d="M2.5 1.5 L14 15.5" stroke="#191919" stroke-width="2"/><path d="M3 1 L14.5 15" stroke="#c4c4c4" stroke-width="1"/></svg>
<svg class="i" style="left:1547px;top:980px" width="17" height="16" viewBox="0 0 17 16"><circle cx="8.5" cy="8" r="6.5" fill="none" stroke="#c4c4c4" stroke-width="1.5"/><path d="M2 6 C5 3 12 3 15 6 M2 10 C5 13 12 13 15 10" fill="none" stroke="#c4c4c4" stroke-width="1.2"/><path d="M2 1 L15 15" stroke="#191919" stroke-width="2"/><path d="M2.5 0.5 L15.5 14.5" stroke="#c4c4c4" stroke-width="1.2"/></svg>
<svg class="i" style="left:1577px;top:981px" width="16" height="16" viewBox="0 0 16 16"><circle cx="8" cy="8" r="7" fill="none" stroke="#c4c4c4" stroke-width="1.4"/><path d="M4.5 8 L7 10.5 L11.5 5.5" fill="none" stroke="#c4c4c4" stroke-width="1.5"/></svg>

<!-- ================= INSPECTOR ================= -->
<div class="a" style="left:1218px;top:33px;width:382px;height:22px;background:#282828"></div>
<div class="a" style="left:1218px;top:33px;width:102px;height:22px;background:#3c3c3c;border-radius:3px 3px 0 0"></div>
<svg class="i" style="left:1227px;top:38px" width="12" height="12" viewBox="0 0 12 12"><circle cx="6" cy="6" r="5.8" fill="#c4c4c4"/><rect x="5" y="5" width="2" height="5" fill="#282828"/><circle cx="6" cy="3" r="1.1" fill="#282828"/></svg>
<div class="t" style="left:1244px;top:37px;font-size:14px">Inspector</div>
<svg class="i" style="left:1560px;top:37px" width="11" height="13"><use href="#lockopen"/></svg>
<svg class="i" style="left:1583px;top:38px" width="4" height="13"><use href="#kebab"/></svg>

<div class="a" style="left:1218px;top:55px;width:382px;height:920px;background:#383838"></div>
<!-- scrollbar -->
<div class="a" style="left:1584px;top:55px;width:16px;height:717px;background:#353535"></div>
<div class="a" style="left:1589px;top:420px;width:8px;height:336px;background:#5e5e5e;border-radius:4px"></div>
<svg class="i" style="left:1588px;top:58px" width="10" height="7" viewBox="0 0 10 7"><path d="M0.5 6.5 L5 1 L9.5 6.5Z" fill="#c4c4c4"/></svg>
<svg class="i" style="left:1588px;top:761px" width="10" height="7" viewBox="0 0 10 7"><path d="M0.5 0.5 L5 6 L9.5 0.5Z" fill="#c4c4c4"/></svg>

<div class="t" style="left:1256px;top:56px">Selected Color</div>
<div class="a" style="left:1373.5px;top:54.5px;width:187px;height:18px;background:#f6f6f6;border:1px solid #1e1e1e"></div>
<div class="a" style="left:1561.5px;top:54.5px;width:20px;height:18.5px;background:#303030;border-radius:3px;border:1px solid #2a2a2a"></div>
<svg class="i" style="left:1565px;top:57px" width="13" height="13"><use href="#eyedrop"/></svg>
<div class="t" style="left:1256px;top:78px">Disabled Color</div>
<div class="a" style="left:1373.5px;top:76px;width:187px;height:18px;background:#000;border:1px solid #1e1e1e"></div>
<div class="a" style="left:1374.5px;top:77px;width:185px;height:13.5px;background:#c8c8c8"></div>
<div class="a" style="left:1374.5px;top:90.5px;width:93px;height:2.5px;background:#ffffff"></div>
<div class="a" style="left:1561.5px;top:76px;width:20px;height:18.5px;background:#303030;border-radius:3px;border:1px solid #2a2a2a"></div>
<svg class="i" style="left:1565px;top:79px" width="13" height="13"><use href="#eyedrop"/></svg>
<div class="t" style="left:1256px;top:100px">Color Multiplier</div>
<div class="a" style="left:1378px;top:107px;width:142px;height:2px;background:#5e5e5e;border-radius:1px"></div>
<div class="a" style="left:1373.5px;top:102px;width:12px;height:12px;border-radius:50%;background:#9a9a9a"></div>
<div class="a" style="left:1526.5px;top:98.5px;width:54px;height:20px;background:#2a2a2a;border-radius:3px;border:1px solid #212121"></div>
<div class="t" style="left:1531px;top:101px">1</div>
<div class="t" style="left:1256px;top:122.5px">Fade Duration</div>
<div class="a" style="left:1373.5px;top:120.5px;width:207px;height:19.5px;background:#2a2a2a;border-radius:3px;border:1px solid #212121"></div>
<div class="t" style="left:1377px;top:122.5px">0.1</div>

<div class="t" style="left:1239px;top:154px">Navigation</div>
<div class="a" style="left:1373.5px;top:151.5px;width:207px;height:18.5px;background:#4d4d4d;border-radius:3px;border:1px solid #303030"></div>
<div class="t" style="left:1378px;top:153px">Automatic</div>
<div class="dd" style="left:1565.5px;top:158px"></div>
<div class="a" style="left:1371.5px;top:176.5px;width:209px;height:18.5px;background:#46607e;border-radius:3px;border:1px solid #2c3e52"></div>
<div class="t" style="left:1371.5px;top:178px;width:209px;text-align:center;color:#dce8f4">Visualize</div>

<!-- On Click -->
<div class="a" style="left:1238.5px;top:206.5px;width:342px;height:22px;background:#2d2d2d;border-radius:3px 3px 0 0;border:1px solid #242424"></div>
<div class="t" style="left:1246px;top:210px">On Click ()</div>
<div class="a" style="left:1238.5px;top:228.5px;width:342px;height:62.5px;background:#464646;border:1px solid #242424;border-top:none"></div>
<div class="a" style="left:1244px;top:242px;width:13px;height:1.5px;background:#5e5e5e"></div>
<div class="a" style="left:1244px;top:246px;width:13px;height:1.5px;background:#5e5e5e"></div>
<div class="a" style="left:1261.5px;top:237px;width:92.5px;height:19px;background:#4d4d4d;border-radius:3px;border:1px solid #303030"></div>
<div class="t" style="left:1265px;top:239px">Runtime On</div>
<div class="dd" style="left:1340px;top:244px"></div>
<div class="a" style="left:1360.5px;top:237px;width:213px;height:19px;background:#4d4d4d;border-radius:3px;border:1px solid #303030"></div>
<div class="t" style="left:1365px;top:239px;letter-spacing:0.25px">TokenManager.GetTokenNam</div>
<div class="dd" style="left:1557px;top:244px"></div>
<div class="a" style="left:1261.5px;top:260px;width:93px;height:18.5px;background:#2a2a2a;border-radius:3px;border:1px solid #212121"></div>
<svg class="i" style="left:1266px;top:263px" width="10" height="12" viewBox="0 0 10 12"><path d="M0.5 0.5 H7 L9.5 3 V11.5 H0.5Z" fill="#ececec"/><path d="M3.6 3 L3 9.5 M6.2 3 L5.6 9.5 M2 5 H7.6 M1.8 7.5 H7.4" stroke="#3a7a3a" stroke-width="0.8"/></svg>
<div class="a" style="left:1279px;top:261px;width:56px;height:17px;overflow:hidden"><div class="t" style="left:0;top:1px">TokenManager</div></div>
<svg class="i" style="left:1337px;top:263px" width="13" height="13" viewBox="0 0 13 13"><circle cx="6.5" cy="6.5" r="5.2" fill="none" stroke="#c4c4c4" stroke-width="1.4"/><circle cx="6.5" cy="6.5" r="2" fill="#c4c4c4"/></svg>
<div class="a" style="left:1506px;top:291px;width:63px;height:20px;background:#464646;border:1px solid #242424;border-top:none;border-radius:0 0 3px 3px"></div>
<svg class="i" style="left:1518px;top:295px" width="12" height="12" viewBox="0 0 12 12"><path d="M6 0.5 V11.5 M0.5 6 H11.5" stroke="#d0d0d0" stroke-width="2"/></svg>
<div class="a" style="left:1547px;top:300px;width:11px;height:2px;background:#d0d0d0"></div>

<!-- Material header -->
<div class="a" style="left:1218px;top:323px;width:368px;height:1px;background:#232323"></div>
<div class="a" style="left:1218px;top:324px;width:368px;height:61px;background:#3e3e3e"></div>
<div class="a" style="left:1218px;top:385px;width:368px;height:1px;background:#2a2a2a"></div>
<div class="a" style="left:1240px;top:335.5px;width:27px;height:27px;background:#ffffff"></div>
<div class="foldd" style="left:1225px;top:369px;border-top-color:#7a7a7a;border-left-width:4.5px;border-right-width:4.5px;border-top-width:7px"></div>
<div class="t" style="left:1280px;top:331px;font-size:14.5px;letter-spacing:0.45px;color:#c8c8c8">Default UI Material (Material)</div>
<svg class="i" style="left:1552.5px;top:333px" width="13" height="13" viewBox="0 0 13 13"><circle cx="6.5" cy="6.5" r="6.2" fill="#c4c4c4"/><path d="M4.3 4.8 A2.2 2.2 0 1 1 7.5 6.6 C6.8 7 6.5 7.3 6.5 8.2" fill="none" stroke="#3e3e3e" stroke-width="1.5"/><circle cx="6.5" cy="10" r="0.9" fill="#3e3e3e"/></svg>
<svg class="i" style="left:1574.5px;top:333px" width="4" height="13"><use href="#kebab"/></svg>
<div class="t" style="left:1277px;top:358px;color:#8a8a8a">Shader</div>
<div class="a" style="left:1335px;top:357px;width:140px;height:18px;background:#454545;border-radius:3px"></div>
<div class="t" style="left:1338px;top:358px;color:#9a9a9a">UI/Default</div>
<div class="dd" style="left:1461px;top:363px;border-top-color:#8a8a8a"></div>
<div class="a" style="left:1482px;top:357px;width:47px;height:18.5px;background:#585858;border-radius:3px;border:1px solid #303030"></div>
<div class="t" style="left:1482px;top:358.5px;width:47px;text-align:center;color:#dadada">Edit...</div>
<div class="a" style="left:1535px;top:357px;width:45.5px;height:18.5px;background:#4d4d4d;border-radius:3px;border:1px solid #303030"></div>
<svg class="i" style="left:1543px;top:361px" width="13" height="10" viewBox="0 0 13 10"><circle cx="1.2" cy="1.2" r="1" fill="#c4c4c4"/><path d="M3 1.2 H12 M5 5 H12 M5 8.8 H12 M2 5 H3 M2 8.8 H3" stroke="#c4c4c4" stroke-width="1.3"/></svg>
<div class="dd" style="left:1566px;top:363px"></div>

<!-- material props -->
<div class="t" style="left:1256px;top:396px;color:#8a8a8a">Sprite Texture</div>
<div class="a" style="left:1514px;top:397px;width:64px;height:64.5px;background:repeating-linear-gradient(-45deg,#8c8c8c 0 2px,#a8a8a8 2px 4px)"></div>
<div class="a" style="left:1518px;top:406px;width:56px;height:45px;border:3px solid #cfcfcf;background:linear-gradient(160deg,#c9a2b6 0%,#b496b4 35%,#8c84b2 60%,#7e7aae 100%)"></div>
<div class="a" style="left:1518px;top:406px;width:56px;height:45px;background:repeating-linear-gradient(-45deg,rgba(255,255,255,0.09) 0 2px,rgba(0,0,0,0.06) 2px 4px)"></div>
<div class="t" style="left:1546px;top:450px;font-size:11px;color:#c0c0c0;letter-spacing:0">Select</div>
<div class="t" style="left:1273px;top:427px;color:#8a8a8a">Tiling</div>
<div class="t" style="left:1344px;top:427px;color:#8a8a8a">X</div>
<div class="a" style="left:1361px;top:426px;width:61px;height:18px;background:#303030;border-radius:3px"></div>
<div class="t" style="left:1364px;top:427px;color:#9a9a9a">1</div>
<div class="t" style="left:1429px;top:427px;color:#8a8a8a">Y</div>
<div class="a" style="left:1445.5px;top:426px;width:61px;height:18px;background:#303030;border-radius:3px"></div>
<div class="t" style="left:1448px;top:427px;color:#9a9a9a">1</div>
<div class="t" style="left:1272px;top:449px;color:#8a8a8a">Offset</div>
<div class="t" style="left:1344px;top:449px;color:#8a8a8a">X</div>
<div class="a" style="left:1361px;top:448px;width:61px;height:18px;background:#303030;border-radius:3px"></div>
<div class="t" style="left:1364px;top:449px;color:#9a9a9a">0</div>
<div class="t" style="left:1429px;top:449px;color:#8a8a8a">Y</div>
<div class="a" style="left:1445.5px;top:448px;width:61px;height:18px;background:#303030;border-radius:3px"></div>
<div class="t" style="left:1448px;top:449px;color:#9a9a9a">0</div>

<div class="t" style="left:1256px;top:476px;color:#8a8a8a">Tint</div>
<div class="a" style="left:1510.5px;top:474.5px;width:50px;height:18px;background:#ffffff"></div>
<svg class="i" style="left:1566px;top:477px;opacity:.55" width="13" height="13"><use href="#eyedrop"/></svg>
<div class="t" style="left:1256px;top:498px;color:#8a8a8a">Stencil Comparison</div>
<div class="a" style="left:1510.5px;top:497px;width:70px;height:18px;background:#303030;border-radius:3px"></div>
<div class="t" style="left:1513px;top:498px;color:#9a9a9a">8</div>
<div class="t" style="left:1256px;top:520px;color:#8a8a8a">Stencil ID</div>
<div class="a" style="left:1510.5px;top:519px;width:70px;height:18px;background:#303030;border-radius:3px"></div>
<div class="t" style="left:1513px;top:520px;color:#9a9a9a">0</div>
<div class="t" style="left:1256px;top:542.5px;color:#8a8a8a">Stencil Operation</div>
<div class="a" style="left:1510.5px;top:541.5px;width:70px;height:18px;background:#303030;border-radius:3px"></div>
<div class="t" style="left:1513px;top:542.5px;color:#9a9a9a">0</div>
<div class="t" style="left:1256px;top:564.5px;color:#8a8a8a">Stencil Write Mask</div>
<div class="a" style="left:1510.5px;top:563.5px;width:70px;height:18px;background:#303030;border-radius:3px"></div>
<div class="t" style="left:1513px;top:564.5px;color:#9a9a9a">255</div>
<div class="t" style="left:1256px;top:587px;color:#8a8a8a">Stencil Read Mask</div>
<div class="a" style="left:1510.5px;top:586px;width:70px;height:18px;background:#303030;border-radius:3px"></div>
<div class="t" style="left:1513px;top:587px;color:#9a9a9a">255</div>
<div class="t" style="left:1256px;top:609px;color:#8a8a8a">Color Mask</div>
<div class="a" style="left:1510.5px;top:608px;width:70px;height:18px;background:#303030;border-radius:3px"></div>
<div class="t" style="left:1513px;top:609px;color:#9a9a9a">15</div>
<div class="t" style="left:1256px;top:631.5px;color:#8a8a8a">Use Alpha Clip</div>
<div class="a" style="left:1510.5px;top:631.5px;width:15px;height:15px;background:#303030;border-radius:2px"></div>
<div class="t" style="left:1256px;top:669px;color:#8a8a8a">Render Queue</div>
<div class="a" style="left:1399px;top:668px;width:107px;height:18px;background:#404040;border-radius:3px"></div>
<div class="t" style="left:1403px;top:669px;color:#9a9a9a">From Shader</div>
<div class="dd" style="left:1493px;top:674px;border-top-color:#8a8a8a"></div>
<div class="a" style="left:1510.5px;top:668px;width:70px;height:18px;background:#303030;border-radius:3px"></div>
<div class="t" style="left:1514px;top:669px;color:#9a9a9a">3000</div>
<div class="t" style="left:1256px;top:693.5px;color:#8a8a8a">Double Sided Global Illumination</div>
<div class="a" style="left:1510.5px;top:694px;width:15px;height:15px;background:#303030;border-radius:2px"></div>

<div class="a" style="left:1218px;top:724px;width:368px;height:1px;background:#242424"></div>
<div class="a" style="left:1275.5px;top:735px;width:253.5px;height:24px;background:#585858;border-radius:3px;border:1px solid #303030"></div>
<div class="t" style="left:1275.5px;top:739px;width:253.5px;text-align:center;color:#dadada">Add Component</div>

<!-- preview -->
<div class="a" style="left:1218px;top:772px;width:382px;height:2px;background:#262626"></div>
<div class="a" style="left:1218px;top:774px;width:382px;height:24px;background:#3c3c3c"></div>
<div class="a" style="left:1225px;top:775px;width:100px;height:22px;background:#383838"></div>
<div class="t" style="left:1227px;top:778px;font-weight:bold;color:#d8d8d8;letter-spacing:0.2px">NameButton</div>
<div class="dd" style="left:1311px;top:783px"></div>
<div class="a" style="left:1325px;top:774px;width:1px;height:24px;background:#2c2c2c"></div>
<div class="a" style="left:1329px;top:784px;width:251px;height:1.2px;background:#5e5e5e"></div>
<div class="a" style="left:1329px;top:787px;width:251px;height:1.2px;background:#5e5e5e"></div>
<div class="a" style="left:1582px;top:774px;width:1px;height:24px;background:#2c2c2c"></div>
<svg class="i" style="left:1589px;top:779px" width="4" height="13"><use href="#kebab"/></svg>
<div class="a" style="left:1218px;top:798px;width:382px;height:170px;background:#333333"></div>
<div class="a" style="left:1218px;top:968px;width:382px;height:7px;background:#3c3c3c"></div>
<svg class="i" style="left:1323.3px;top:798px" width="171.3" height="170" viewBox="0 0 171.3 170"><defs><pattern id="chk" x="-2.6" y="-3.8" width="35.2" height="35.2" patternUnits="userSpaceOnUse"><rect width="35.2" height="35.2" fill="#5e5e5e"/><rect width="17.6" height="17.6" fill="#4a4a4a"/><rect x="17.6" y="17.6" width="17.6" height="17.6" fill="#4a4a4a"/></pattern></defs><rect width="171.3" height="170" fill="url(#chk)"/></svg>
<div class="a" style="left:1337.5px;top:812.5px;width:143.5px;height:136px;background:#fbfbfb;border-radius:34px;filter:blur(1.8px);box-shadow:0 0 5px 1px rgba(0,0,0,0.35)"></div>
<svg class="i" style="left:1323px;top:798px" width="172" height="170" viewBox="0 0 172 170"><g stroke="#484848" stroke-width="1.3" fill="none"><path d="M0 54.5 H172 M0 119.8 H172" stroke-dasharray="8.8 8.8" stroke-dashoffset="8.5"/><path d="M53.3 0 V170 M117.6 0 V170" stroke-dasharray="8.8 8.8" stroke-dashoffset="6.2"/></g></svg>
<div class="t" style="left:1323px;top:932px;width:172px;text-align:center;font-size:14px;font-weight:bold;letter-spacing:-0.1px;color:#f4f4f4;text-shadow:1px 1px 0 #000,-1px -1px 0 #000,1px -1px 0 #000,-1px 1px 0 #000">NameButton</div>
<div class="t" style="left:1323px;top:948px;width:172px;text-align:center;font-size:14px;font-weight:bold;letter-spacing:-0.1px;color:#f4f4f4;text-shadow:1px 1px 0 #000,-1px -1px 0 #000,1px -1px 0 #000,-1px 1px 0 #000">Image Size: 32x32</div>

<!-- ================= ARROW ================= -->
<svg class="i" style="left:0;top:0" width="1600" height="1000" viewBox="0 0 1600 1000"><path d="M190 105.5 L1244 268.5" stroke="#2ee03a" stroke-width="3.2" stroke-linecap="round"/><path d="M1256 271 L1241.5 261.5 L1242 276.5Z" fill="#2ee03a"/></svg>

</body></html>
